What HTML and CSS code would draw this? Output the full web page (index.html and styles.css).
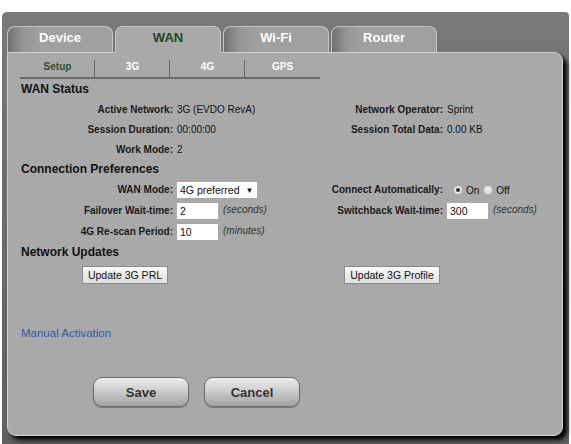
FILE: index.html
```html
<!DOCTYPE html>
<html lang="en">
<head>
	<meta charset="utf-8" />
	<title>WAN Setup</title>
	<link rel="stylesheet" href="styles.css">
</head>
<body>
	<div class="frame">
		<div class="tabs">
			<div class="tab">Device</div>
			<div class="tab active">WAN</div>
			<div class="tab">Wi-Fi</div>
			<div class="tab">Router</div>
		</div>

		<div class="panel">
			<div class="subtabs">
				<div class="subtab current">Setup</div>
				<div class="subtab">3G</div>
				<div class="subtab">4G</div>
				<div class="subtab last">GPS</div>
			</div>

			<h2>WAN Status</h2>
			<div class="row">
				<label>Active Network:</label><span>3G (EVDO RevA)</span>
				<label>Network Operator:</label><span>Sprint</span>
			</div>
			<div class="row">
				<label>Session Duration:</label><span>00:00:00</span>
				<label>Session Total Data:</label><span>0.00 KB</span>
			</div>
			<div class="row">
				<label>Work Mode:</label><span>2</span>
			</div>

			<h2>Connection Preferences</h2>
			<div class="row tall">
				<label>WAN Mode:</label><span><span class="select">4G preferred <b>&#9660;</b></span></span>
				<label>Connect Automatically:</label>
				<span class="radios">
					<span class="radio checked"></span><span class="opt">On</span>
					<span class="radio"></span><span class="opt">Off</span>
				</span>
			</div>
			<div class="row tall">
				<label>Failover Wait-time:</label><span><input type="text" value="2" /><i>(seconds)</i></span>
				<label>Switchback Wait-time:</label><span><input type="text" value="300" /><i>(seconds)</i></span>
			</div>
			<div class="row tall">
				<label>4G Re-scan Period:</label><span><input type="text" value="10" /><i>(minutes)</i></span>
			</div>

			<h2>Network Updates</h2>
			<div class="updates">
				<button class="small">Update 3G PRL</button>
				<button class="small">Update 3G Profile</button>
			</div>

			<a class="manual">Manual Activation</a>

			<div class="actions">
				<button class="big">Save</button>
				<button class="big">Cancel</button>
			</div>
		</div>
	</div>
</body>
</html>
```

FILE: styles.css
```css
body{margin:0;padding:0;background:#fff;font-family:"Liberation Sans",Arial,sans-serif;color:#111;overflow:hidden;}
.frame{margin:12px 0 0 2px;width:567px;height:432px;padding:14px 0 0 5px;box-sizing:border-box;background:linear-gradient(#79797b,#68686a 60%,#5e5e60);border-radius:5px 4px 0 0;}

.tabs{display:flex;height:26px;gap:2px;}
.tab{width:106px;box-sizing:border-box;border:1px solid #c4c4c4;border-bottom:none;border-radius:8px 8px 0 0;background:linear-gradient(90deg,#6f6f6f,#959595 14px,#a0a0a0 30px);color:#fff;font-weight:bold;font-size:13px;text-align:center;line-height:22px;}
.tab.active{height:27px;margin-bottom:-1px;background:#a9a9a9;color:#1d4a1d;position:relative;z-index:1;}

.panel{width:556px;height:384px;box-sizing:border-box;background:#a9a9a9;border:1px solid #d2d2d2;border-radius:0 9px 9px 9px;box-shadow:4px 4px 4px #000;padding:0 0 0 13px;}

.subtabs{display:flex;width:300px;margin:4px 0 0 -1px;border-bottom:2px solid #6b6b6b;}
.subtab{width:75px;height:20px;line-height:20px;text-align:center;font-size:10px;font-weight:bold;color:#fff;position:relative;}
.subtab:not(.last)::after{content:"";position:absolute;right:0;top:3px;bottom:0;border-right:1px solid #6b6b6b;}
.subtab.current{color:#2c502c;}

h2{margin:2px 0 2px;font-size:12px;line-height:16px;color:#111;}

.row{display:grid;grid-template-columns:152px 120px 142px 1fr;column-gap:4px;height:20px;align-items:center;font-size:10px;}
.row.tall{height:21px;}
.row label{text-align:right;font-weight:bold;color:#1a1a1a;}
.row span{white-space:nowrap;}
.row i{font-size:10px;color:#333;margin-left:5px;}

.select{display:inline-block;width:80px;height:16px;line-height:16px;background:#fff;box-sizing:border-box;padding-left:3px;font-size:10.5px;}
.select b{font-size:8px;margin-left:3px;vertical-align:1px;}
input{width:41px;height:16px;border:none;padding:0 3px;margin:0;box-sizing:border-box;font-family:"Liberation Sans",Arial,sans-serif;font-size:10.5px;color:#111;vertical-align:middle;}

.radios{display:flex;align-items:center;padding-left:7px;}
.radio{width:8px;height:8px;border-radius:50%;background:#e6e6e6;box-shadow:0 0 1px #999;position:relative;}
.radio.checked::after{content:"";position:absolute;left:2px;top:2px;width:4px;height:4px;border-radius:50%;background:#333;}
.opt{margin:2px 5px 0 4px;}

.updates{display:flex;gap:176px;padding:4px 0 0 61px;}
button.small{height:18px;padding:0;white-space:nowrap;border:1px solid #8a8a8a;background:linear-gradient(#fafafa,#dedede);font-family:"Liberation Sans",Arial,sans-serif;font-size:10.5px;color:#111;}
button.small:first-child{width:86px;}
button.small:last-child{width:96px;}

.manual{display:block;margin:42px 0 0 0;font-size:11.5px;line-height:14px;color:#2d5ea8;}

.actions{display:flex;gap:15px;padding:37px 0 0 72px;}
button.big{width:96px;height:30px;border:1px solid #6e6e6e;border-radius:9px;background:linear-gradient(#ececec,#cacaca 50%,#a2a2a2);box-shadow:0 1px 1px #777;font-family:"Liberation Sans",Arial,sans-serif;font-size:13px;font-weight:bold;color:#333;}
```
